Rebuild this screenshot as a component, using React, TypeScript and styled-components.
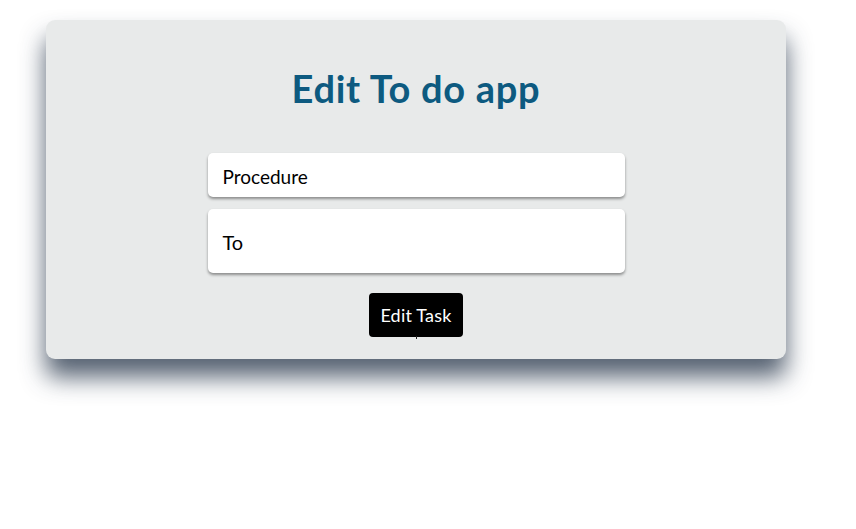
import React from "react";
import styled, { createGlobalStyle } from "styled-components";

const Global = createGlobalStyle`
  html, body { margin: 0; padding: 0; background: #ffffff; }
  body { font-family: "Lato", "Open Sans", sans-serif; }
`;

const Page = styled.div`
  padding: 20px 70px 80px 46px;
`;

const Card = styled.div`
  background: #e8eaea;
  border-radius: 9px;
  box-shadow: 0 18px 24px rgba(38, 54, 74, 0.78);
  height: 339px;
  box-sizing: border-box;
  padding-top: 44px;
  display: flex;
  flex-direction: column;
  align-items: center;
`;

const Title = styled.h1`
  margin: 0;
  font-family: "Lato", sans-serif;
  font-weight: 700;
  font-size: 38px;
  line-height: 48px;
  color: #0d5a80;
  letter-spacing: 0.7px;
`;

const Form = styled.div`
  margin-top: 41px;
  width: 417px;
  display: flex;
  flex-direction: column;
  gap: 12px;
  align-items: center;
`;

const Field = styled.div<{ $h: number; $size: number; $pt: number }>`
  width: 100%;
  height: ${(p) => p.$h}px;
  box-sizing: border-box;
  background: #ffffff;
  border-radius: 5px;
  box-shadow: 0 2px 3px rgba(0, 0, 0, 0.4);
  display: flex;
  align-items: center;
  padding-left: 15px;
  padding-top: ${(p) => p.$pt}px;
  font-family: "Lato", sans-serif;
  font-size: ${(p) => p.$size}px;
  color: #000;
`;

const ButtonWrap = styled.div`
  margin-top: 8px;
  position: relative;
`;

const Button = styled.button`
  width: 94px;
  height: 44px;
  background: #000;
  color: #fff;
  border: none;
  border-radius: 4px;
  font-family: "Lato", sans-serif;
  font-size: 18px;
  letter-spacing: 0.2px;
  padding: 0;
  cursor: pointer;
`;

const Tick = styled.span`
  position: absolute;
  left: 47px;
  bottom: -2px;
  width: 1px;
  height: 3px;
  background: #222;
`;

export default function App() {
  return (
    <>
      <Global />
      <Page>
        <Card>
          <Title>Edit To do app</Title>
          <Form>
            <Field $h={44} $size={19} $pt={3}>Procedure</Field>
            <Field $h={64} $size={20} $pt={2}>To</Field>
            <ButtonWrap>
              <Button>Edit Task</Button>
              <Tick />
            </ButtonWrap>
          </Form>
        </Card>
      </Page>
    </>
  );
}
